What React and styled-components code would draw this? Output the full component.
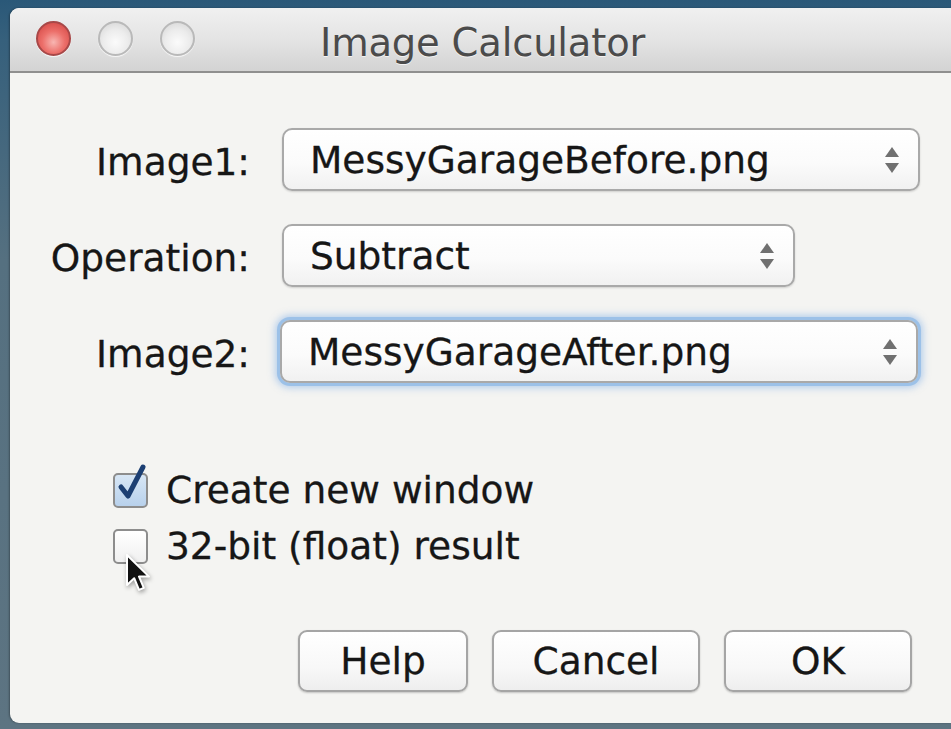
import React from "react";
import styled, { createGlobalStyle } from "styled-components";

const GlobalStyle = createGlobalStyle`
  html, body {
    margin: 0;
    padding: 0;
    height: 100%;
    overflow: hidden;
  }
  body {
    font-family: "DejaVu Sans", "Noto Sans", sans-serif;
    background: #4e6777;
  }
  #root {
    height: 100%;
  }
`;

const Desktop = styled.div`
  height: 100%;
  box-sizing: border-box;
  padding: 8px 0 6px 10px;
  background: linear-gradient(180deg, #2a5878 0px, #36607c 40px, #557080 260px, #5d7482 100%);
  display: flex;
`;

const Window = styled.div`
  flex: 1;
  display: flex;
  flex-direction: column;
  background: #f4f4f2;
  border-radius: 9px 0 0 9px;
  overflow: hidden;
  box-shadow: -1px 0 2px rgba(0, 0, 0, 0.3);
`;

const TitleBar = styled.div`
  height: 63px;
  flex-shrink: 0;
  display: flex;
  align-items: center;
  position: relative;
  background: linear-gradient(180deg, #f0f0f0 0%, #e4e4e4 50%, #d3d3d3 100%);
  border-bottom: 2px solid #8f8f8f;
`;

const Lights = styled.div`
  display: flex;
  gap: 27px;
  padding-left: 26px;
  margin-top: -3px;
`;

const Light = styled.span`
  width: 35px;
  height: 35px;
  border-radius: 50%;
  box-sizing: border-box;
  border: 2px solid ${(p) => (p.$red ? "#a84848" : "#b9b9b9")};
  background: ${(p) =>
    p.$red
      ? "radial-gradient(circle at 50% 62%, #f8b6b2 0%, #ec6f6a 45%, #cf3f3c 100%)"
      : "radial-gradient(circle at 50% 62%, #fbfbfb 0%, #ececec 50%, #d2d2d2 100%)"};
  box-shadow: 0 1px 1px rgba(255, 255, 255, 0.8);
`;

const Title = styled.div`
  position: absolute;
  left: 310px;
  top: 12px;
  font-size: 38.5px;
  letter-spacing: -0.2px;
  color: #4b4b4b;
  text-shadow: 0 1px 0 rgba(255, 255, 255, 0.7);
`;

const Content = styled.div`
  display: flex;
  flex-direction: column;
  padding: 55px 0 0 38px;
  font-size: 37.5px;
  color: #161616;
  -webkit-text-stroke: 0.3px #161616;
`;

const Form = styled.div`
  display: grid;
  grid-template-columns: 202px max-content;
  column-gap: 32px;
  row-gap: 33px;
  align-items: center;
`;

const Label = styled.label`
  justify-self: end;
  white-space: nowrap;
  margin-top: 4px;
`;

const Select = styled.div`
  width: ${(p) => p.$width}px;
  height: 63px;
  box-sizing: border-box;
  display: flex;
  align-items: center;
  justify-content: space-between;
  padding: 0 17px 0 26px;
  border: 2px solid #a9a9a9;
  border-radius: 10px;
  background: linear-gradient(180deg, #ffffff 0%, #fbfbfb 55%, #f1f1f1 100%);
  box-shadow: ${(p) =>
    p.$focused
      ? "0 0 0 3px #9cc1e8, 0 0 7px 5px rgba(120, 170, 230, 0.5)"
      : "0 1px 2px rgba(0, 0, 0, 0.15)"};
  margin-left: ${(p) => (p.$focused ? "-2px" : "0")};
  white-space: nowrap;
`;

const Stepper = () => (
  <svg width="18" height="34" viewBox="0 0 18 34">
    <polygon points="9,4 16,14 2,14" fill="#707070" />
    <polygon points="2,20 16,20 9,30" fill="#707070" />
  </svg>
);

const Options = styled.div`
  display: flex;
  flex-direction: column;
  gap: 20px;
  margin: 89px 0 0 65px;
`;

const Option = styled.div`
  display: flex;
  align-items: center;
  gap: 18px;
  height: 36px;
  white-space: nowrap;
`;

const Box = styled.span`
  position: relative;
  width: 35px;
  height: 35px;
  box-sizing: border-box;
  border: 2px solid #8d8d8d;
  border-radius: 5px;
  background: ${(p) =>
    p.$checked
      ? "linear-gradient(180deg, #d7e6f5 0%, #b8d1ec 100%)"
      : "linear-gradient(180deg, #ffffff 0%, #f0f0f0 100%)"};
  flex-shrink: 0;
`;

const Tick = styled.svg`
  position: absolute;
  left: 2px;
  top: -12px;
`;

const Pointer = styled.svg`
  position: absolute;
  left: 10px;
  top: 22px;
  filter: drop-shadow(1px 2px 2px rgba(0, 0, 0, 0.35));
`;

const Buttons = styled.div`
  display: flex;
  justify-content: flex-end;
  gap: 24px;
  margin: 66px 39px 0 0;
`;

const Button = styled.button`
  width: ${(p) => p.$width}px;
  height: 62px;
  font-family: inherit;
  font-size: 37.5px;
  color: #161616;
  -webkit-text-stroke: 0.3px #161616;
  border: 2px solid #a5a5a5;
  border-radius: 9px;
  background: linear-gradient(180deg, #ffffff 0%, #f8f8f8 60%, #eeeeee 100%);
  box-shadow: 0 1px 2px rgba(0, 0, 0, 0.2);
  padding: 0;
`;

const fields = [
  { label: "Image1:", value: "MessyGarageBefore.png", width: 638 },
  { label: "Operation:", value: "Subtract", width: 513 },
  { label: "Image2:", value: "MessyGarageAfter.png", width: 638, focused: true },
];

const App = () => {
  return (
    <>
      <GlobalStyle />
      <Desktop>
        <Window>
          <TitleBar>
            <Lights>
              <Light $red />
              <Light />
              <Light />
            </Lights>
            <Title>Image Calculator</Title>
          </TitleBar>
          <Content>
            <Form>
              {fields.map(({ label, value, width, focused }) => (
                <React.Fragment key={label}>
                  <Label>{label}</Label>
                  <Select $width={width} $focused={focused}>
                    <span>{value}</span>
                    <Stepper />
                  </Select>
                </React.Fragment>
              ))}
            </Form>
            <Options>
              <Option>
                <Box $checked>
                  <Tick width="32" height="40" viewBox="0 0 32 40">
                    <path
                      d="M4 24 L11 33 L26 4"
                      fill="none"
                      stroke="#1c3f73"
                      strokeWidth="5"
                      strokeLinecap="round"
                      strokeLinejoin="round"
                    />
                  </Tick>
                </Box>
                <span>Create new window</span>
              </Option>
              <Option>
                <Box>
                  <Pointer width="26" height="40" viewBox="0 0 13 20">
                    <path
                      d="M1 1 L1 16 L4.6 12.6 L7 18.4 L9.4 17.4 L7 11.8 L12 11.8 Z"
                      fill="#111"
                      stroke="#fff"
                      strokeWidth="1"
                      strokeLinejoin="round"
                    />
                  </Pointer>
                </Box>
                <span>32-bit (float) result</span>
              </Option>
            </Options>
            <Buttons>
              <Button $width={170}>Help</Button>
              <Button $width={208}>Cancel</Button>
              <Button $width={188}>OK</Button>
            </Buttons>
          </Content>
        </Window>
      </Desktop>
    </>
  );
};

export default App;
